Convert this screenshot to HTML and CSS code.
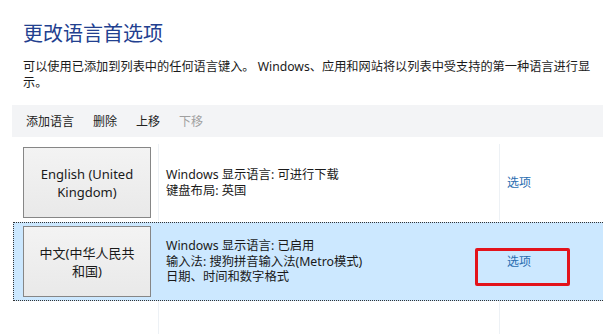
FILE: index.html
```html
<!DOCTYPE html>
<html lang="zh-CN">
<head>
  <meta charset="UTF-8">
  <title>更改语言首选项</title>
  <link rel="stylesheet" href="styles.css">
</head>
<body>

<div class="intro">
  <h1 class="title">更改语言首选项</h1>
  <p class="desc">可以使用已添加到列表中的任何语言键入。 Windows、应用和网站将以列表中受支持的第一种语言进行显示。</p>
</div>

<div class="toolbar">
  <span class="tool">添加语言</span>
  <span class="tool">删除</span>
  <span class="tool">上移</span>
  <span class="tool disabled">下移</span>
</div>

<div class="list">
  <div class="row">
    <div class="cell lang"><button class="lang-btn">English (United Kingdom)</button></div>
    <div class="cell info">
      <div>Windows 显示语言: 可进行下载</div>
      <div>键盘布局: 英国</div>
    </div>
    <div class="cell opts"><a class="opt-link">选项</a></div>
  </div>
  <div class="row selected">
    <div class="cell lang"><button class="lang-btn">中文(中华人民共和国)</button></div>
    <div class="cell info">
      <div>Windows 显示语言: 已启用</div>
      <div>输入法: 搜狗拼音输入法(Metro模式)</div>
      <div>日期、时间和数字格式</div>
    </div>
    <div class="cell opts"><a class="opt-link marked">选项</a></div>
  </div>
  <div class="row filler">
    <div class="cell lang"></div>
    <div class="cell info"></div>
    <div class="cell opts"></div>
  </div>
</div>

</body>
</html>
```

FILE: styles.css
```css
body { margin: 0; background: #fff; color: #1a1a1a; font-family: "Segoe UI", "Noto Sans", "Noto Sans CJK SC", sans-serif; font-size: 12px; overflow: hidden; }
.intro { padding: 20px 0 0 23px; }
.title { margin: 0; font-size: 20px; line-height: 28px; font-weight: normal; color: #22408f; }
.desc { margin: 11px 0 0; width: 578px; font-size: 12.2px; line-height: 16px; color: #1a1a1a; }
.toolbar { margin: 14px 0 0 12px; height: 32px; padding-left: 14px; background: #f3f4f6; display: flex; align-items: center; gap: 19px; }
.tool { color: #222; }
.tool.disabled { color: #a0a0a0; }
.list { margin: 6px 0 0 13px; display: flex; flex-direction: column; }
.row { display: flex; height: 79px; box-sizing: border-box; border: 1px solid transparent; border-right: none; }
.row.selected { background: #cce8ff; border: 1px dotted #333; border-right: none; }
.row.filler { height: 40px; border: none; }
.cell { box-sizing: border-box; display: flex; align-items: center; }
.lang { width: 144px; padding: 0 0 0 9px; }
.filler .lang { width: 145px; }
.info { width: 341px; padding-left: 7px; flex-direction: column; justify-content: center; align-items: flex-start; font-size: 12.3px; line-height: 15.5px; border-left: 1px solid #edf1f5; }
.selected .info { border-left-color: transparent; }
.opts { flex: 1; padding-left: 7px; border-left: 1px solid #edf1f5; }
.selected .opts { border-left-color: transparent; }
.lang-btn { width: 128px; height: 71px; padding: 0 12px; border: 1px solid #868686; background: linear-gradient(#f3f3f3, #e9e9e9); font-family: inherit; font-size: 13px; line-height: 18px; color: #1a1a1a; }
.opt-link { position: relative; color: #2a6db0; line-height: 15px; cursor: pointer; }
.opt-link.marked::after { content: ""; position: absolute; left: -32px; top: -6px; width: 95px; height: 38px; box-sizing: border-box; border: 3px solid #e3131b; border-radius: 2px; }
```
